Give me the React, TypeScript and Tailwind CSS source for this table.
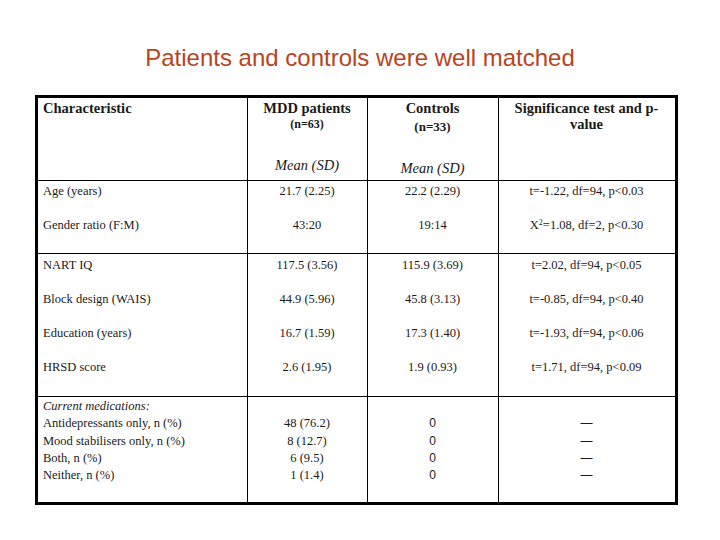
import React from "react";

const serif = "font-['Liberation_Serif',_'Times_New_Roman',_serif]";

const block1 = [
  { label: "Age (years)", mdd: "21.7 (2.25)", ctl: "22.2 (2.29)", test: "t=-1.22, df=94, p<0.03" },
  { label: "Gender ratio (F:M)", mdd: "43:20", ctl: "19:14", test: "chi" },
];

const block2 = [
  { label: "NART IQ", mdd: "117.5 (3.56)", ctl: "115.9 (3.69)", test: "t=2.02, df=94, p<0.05" },
  { label: "Block design (WAIS)", mdd: "44.9 (5.96)", ctl: "45.8 (3.13)", test: "t=-0.85, df=94, p<0.40" },
  { label: "Education (years)", mdd: "16.7 (1.59)", ctl: "17.3 (1.40)", test: "t=-1.93, df=94, p<0.06" },
  { label: "HRSD score", mdd: "2.6 (1.95)", ctl: "1.9 (0.93)", test: "t=1.71, df=94, p<0.09" },
];

const meds = [
  { label: "Antidepressants only, n (%)", mdd: "48 (76.2)" },
  { label: "Mood stabilisers only, n (%)", mdd: "8 (12.7)" },
  { label: "Both, n (%)", mdd: "6 (9.5)" },
  { label: "Neither, n (%)", mdd: "1 (1.4)" },
];

function Test({ value }: { value: string }) {
  if (value === "chi")
    return (
      <span>
        X<sup className="text-[8px]">2</sup>=1.08, df=2, p&lt;0.30
      </span>
    );
  return <span>{value}</span>;
}

function DataRow({
  row,
  height,
}: {
  row: { label: string; mdd: string; ctl: string; test: string };
  height: string;
}) {
  return (
    <div className={`flex ${height} leading-[18px]`}>
      <div className="w-[209px] pl-[5px]">{row.label}</div>
      <div className="w-[120px] text-center">{row.mdd}</div>
      <div className="w-[131px] text-center">{row.ctl}</div>
      <div className="w-[177px] text-center">
        <Test value={row.test} />
      </div>
    </div>
  );
}

export default function App() {
  return (
    <div className="flex h-[540px] w-[720px] flex-col bg-white pt-[44px]">
      {/* TITLE */}
      <h1 className="h-[28px] text-center font-['Liberation_Sans',_Arial,_sans-serif] text-[24px] leading-[28px] text-[#b8441c]">
        Patients and controls were well matched
      </h1>

      {/* TABLE */}
      <div
        className={`relative ml-[35px] mt-[23px] w-[643px] border-[3px] border-black text-[12.5px] text-[#1a1a1a] ${serif}`}
      >
        {/* column rules */}
        <div className="pointer-events-none absolute inset-0 flex">
          <div className="w-[209px]" />
          <div className="w-[120px] border-l border-black" />
          <div className="w-[131px] border-l border-black" />
          <div className="w-[177px] border-l border-black" />
        </div>

        {/* header */}
        <div className="flex h-[82px] pt-[2px] text-[14.5px] leading-[16px]">
          <div className="w-[209px] pl-[5px] font-bold">Characteristic</div>
          <div className="flex w-[120px] flex-col items-center">
            <span className="font-bold">MDD patients</span>
            <span className="text-[12px] font-bold">(n=63)</span>
            <span className="mt-[25px] italic">Mean (SD)</span>
          </div>
          <div className="flex w-[131px] flex-col items-center">
            <span className="font-bold">Controls</span>
            <span className="mt-[3px] text-[13px] font-bold">(n=33)</span>
            <span className="mt-[25px] italic">Mean (SD)</span>
          </div>
          <div className="w-[177px] text-center font-bold">
            Significance test and p-
            <br />
            value
          </div>
        </div>

        {/* block 1 */}
        <div className="h-[73px] border-t border-black pt-[1px]">
          {block1.map((row) => (
            <DataRow key={row.label} row={row} height="h-[34px]" />
          ))}
        </div>

        {/* block 2 */}
        <div className="h-[143px] border-t border-black pt-[2px]">
          {block2.map((row) => (
            <DataRow key={row.label} row={row} height="h-[34px]" />
          ))}
        </div>

        {/* block 3 */}
        <div className="flex h-[106px] border-t border-black pt-[1px] leading-[17.25px]">
          <div className="w-[209px] pl-[5px]">
            <p className="italic">Current medications:</p>
            {meds.map((m) => (
              <p key={m.label}>{m.label}</p>
            ))}
          </div>
          <div className="w-[120px] text-center">
            <p>&nbsp;</p>
            {meds.map((m) => (
              <p key={m.label}>{m.mdd}</p>
            ))}
          </div>
          <div className="w-[131px] text-center font-['Liberation_Sans',_Arial,_sans-serif] text-[12px]">
            <p>&nbsp;</p>
            <p>0</p>
            <p>0</p>
            <p>0</p>
            <p>0</p>
          </div>
          <div className="w-[177px] text-center font-['Liberation_Sans',_Arial,_sans-serif] text-[12px]">
            <p>&nbsp;</p>
            <p>—</p>
            <p>—</p>
            <p>—</p>
            <p>—</p>
          </div>
        </div>
      </div>
    </div>
  );
}
